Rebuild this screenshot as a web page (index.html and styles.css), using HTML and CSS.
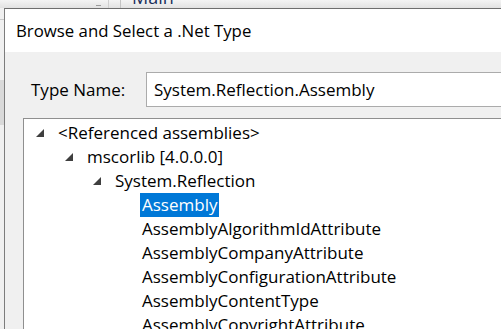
FILE: index.html
```html
<!DOCTYPE html>
<html>
<head>
<meta charset="utf-8">
<title>Browse and Select a .Net Type</title>
<link rel="stylesheet" href="styles.css">
</head>
<body>
<div class="desktop">
  <div class="topstrip">
    <span class="dash"></span>
    <span class="vline first"></span>
    <span class="vline"></span>
    <span class="bg-title">Main</span>
  </div>
  <div class="leftstrip">
    <span class="hl"></span>
    <span class="block"></span>
  </div>
  <div class="dialog">
    <div class="titlebar">Browse and Select a .Net Type</div>
    <div class="content">
      <div class="field">
        <label class="label" for="typename">Type Name:</label>
        <div class="textbox" id="typename">System.Reflection.Assembly</div>
      </div>
      <div class="tree">
        <div class="row lvl0"><svg class="exp" width="8" height="8" viewBox="0 0 8 8"><polygon points="8,0 8,8 0,8"/></svg><span class="text">&lt;Referenced assemblies&gt;</span></div>
        <div class="row lvl1"><svg class="exp" width="8" height="8" viewBox="0 0 8 8"><polygon points="8,0 8,8 0,8"/></svg><span class="text">mscorlib [4.0.0.0]</span></div>
        <div class="row lvl2"><svg class="exp" width="8" height="8" viewBox="0 0 8 8"><polygon points="8,0 8,8 0,8"/></svg><span class="text">System.Reflection</span></div>
        <div class="row leaf"><span class="text selected">Assembly</span></div>
        <div class="row leaf"><span class="text">AssemblyAlgorithmIdAttribute</span></div>
        <div class="row leaf"><span class="text">AssemblyCompanyAttribute</span></div>
        <div class="row leaf"><span class="text">AssemblyConfigurationAttribute</span></div>
        <div class="row leaf"><span class="text">AssemblyContentType</span></div>
        <div class="row leaf"><span class="text">AssemblyCopyrightAttribute</span></div>
      </div>
    </div>
  </div>
</div>
</body>
</html>
```
FILE: styles.css
```css
html, body {
  margin: 0;
  padding: 0;
  width: 501px;
  height: 329px;
  overflow: hidden;
  background: #f0f0f0;
  font-family: "Open Sans", "Noto Sans", sans-serif;
  font-size: 17px;
  color: #000;
}

.desktop {
  display: grid;
  grid-template-columns: 4px 620px;
  grid-template-rows: 8px auto;
}

.topstrip {
  grid-column: 1 / 3;
  background: linear-gradient(#f4f4f4, #e2e2e2);
  overflow: hidden;
  display: flex;
  align-items: flex-start;
}

.dash {
  flex: none;
  width: 5px;
  height: 1px;
  background: #9a9a9a;
  margin: 5px 0 0 96px;
}

.vline {
  flex: none;
  width: 1px;
  height: 8px;
  background: #c4c4c4;
  margin-left: 11px;
}

.vline.first {
  margin-left: 7px;
  background: #cfcfcf;
}

.bg-title {
  flex: none;
  margin: -15px 0 0 11px;
  line-height: 24px;
  font-size: 18px;
  color: #1a2f5a;
}

.leftstrip {
  background: #f0f0f0;
  display: flex;
  flex-direction: column;
}

.hl {
  height: 1px;
  background: #c9c9c9;
  margin-top: 11px;
}

.block {
  height: 45px;
  margin-top: 60px;
  background: #d9d9d9;
}

.dialog {
  border-left: 1px solid #7c7c7c;
  border-top: 1px solid #6e6e6e;
  background: #f0f0f0;
  display: flex;
  flex-direction: column;
}

.titlebar {
  flex: none;
  background: #fff;
  height: 43px;
  box-sizing: border-box;
  padding: 10px 0 0 11px;
  line-height: 24px;
  font-size: 16.8px;
  white-space: nowrap;
}

.content {
  flex: none;
  padding: 20px 0 0 18px;
  display: flex;
  flex-direction: column;
}

.field {
  flex: none;
  display: flex;
  align-items: baseline;
}

.label {
  flex: none;
  width: 115px;
  margin-left: 8px;
  line-height: 24px;
}

.textbox {
  flex: 1;
  border: 1px solid #ababab;
  background: #fff;
  box-sizing: border-box;
  height: 35px;
  padding: 5px 0 0 7px;
  line-height: 24px;
  white-space: nowrap;
}

.tree {
  flex: none;
  margin-top: 11px;
  border: 1px solid #8f8f8f;
  background: #fff;
  padding-top: 2px;
  display: flex;
  flex-direction: column;
}

.row {
  flex: none;
  height: 24px;
  display: flex;
  align-items: center;
  white-space: nowrap;
  line-height: 24px;
}

.exp {
  flex: none;
  fill: #3f3f3f;
  margin-right: 14px;
}

.lvl0 { padding-left: 12px; }
.lvl1 { padding-left: 41px; }
.lvl2 { padding-left: 69px; }
.leaf { padding-left: 118px; }

.text {
  display: inline-block;
  line-height: 24px;
}

.selected {
  background: #0078d7;
  color: #fff;
  padding: 0 2px;
  margin-left: -2px;
}
```
